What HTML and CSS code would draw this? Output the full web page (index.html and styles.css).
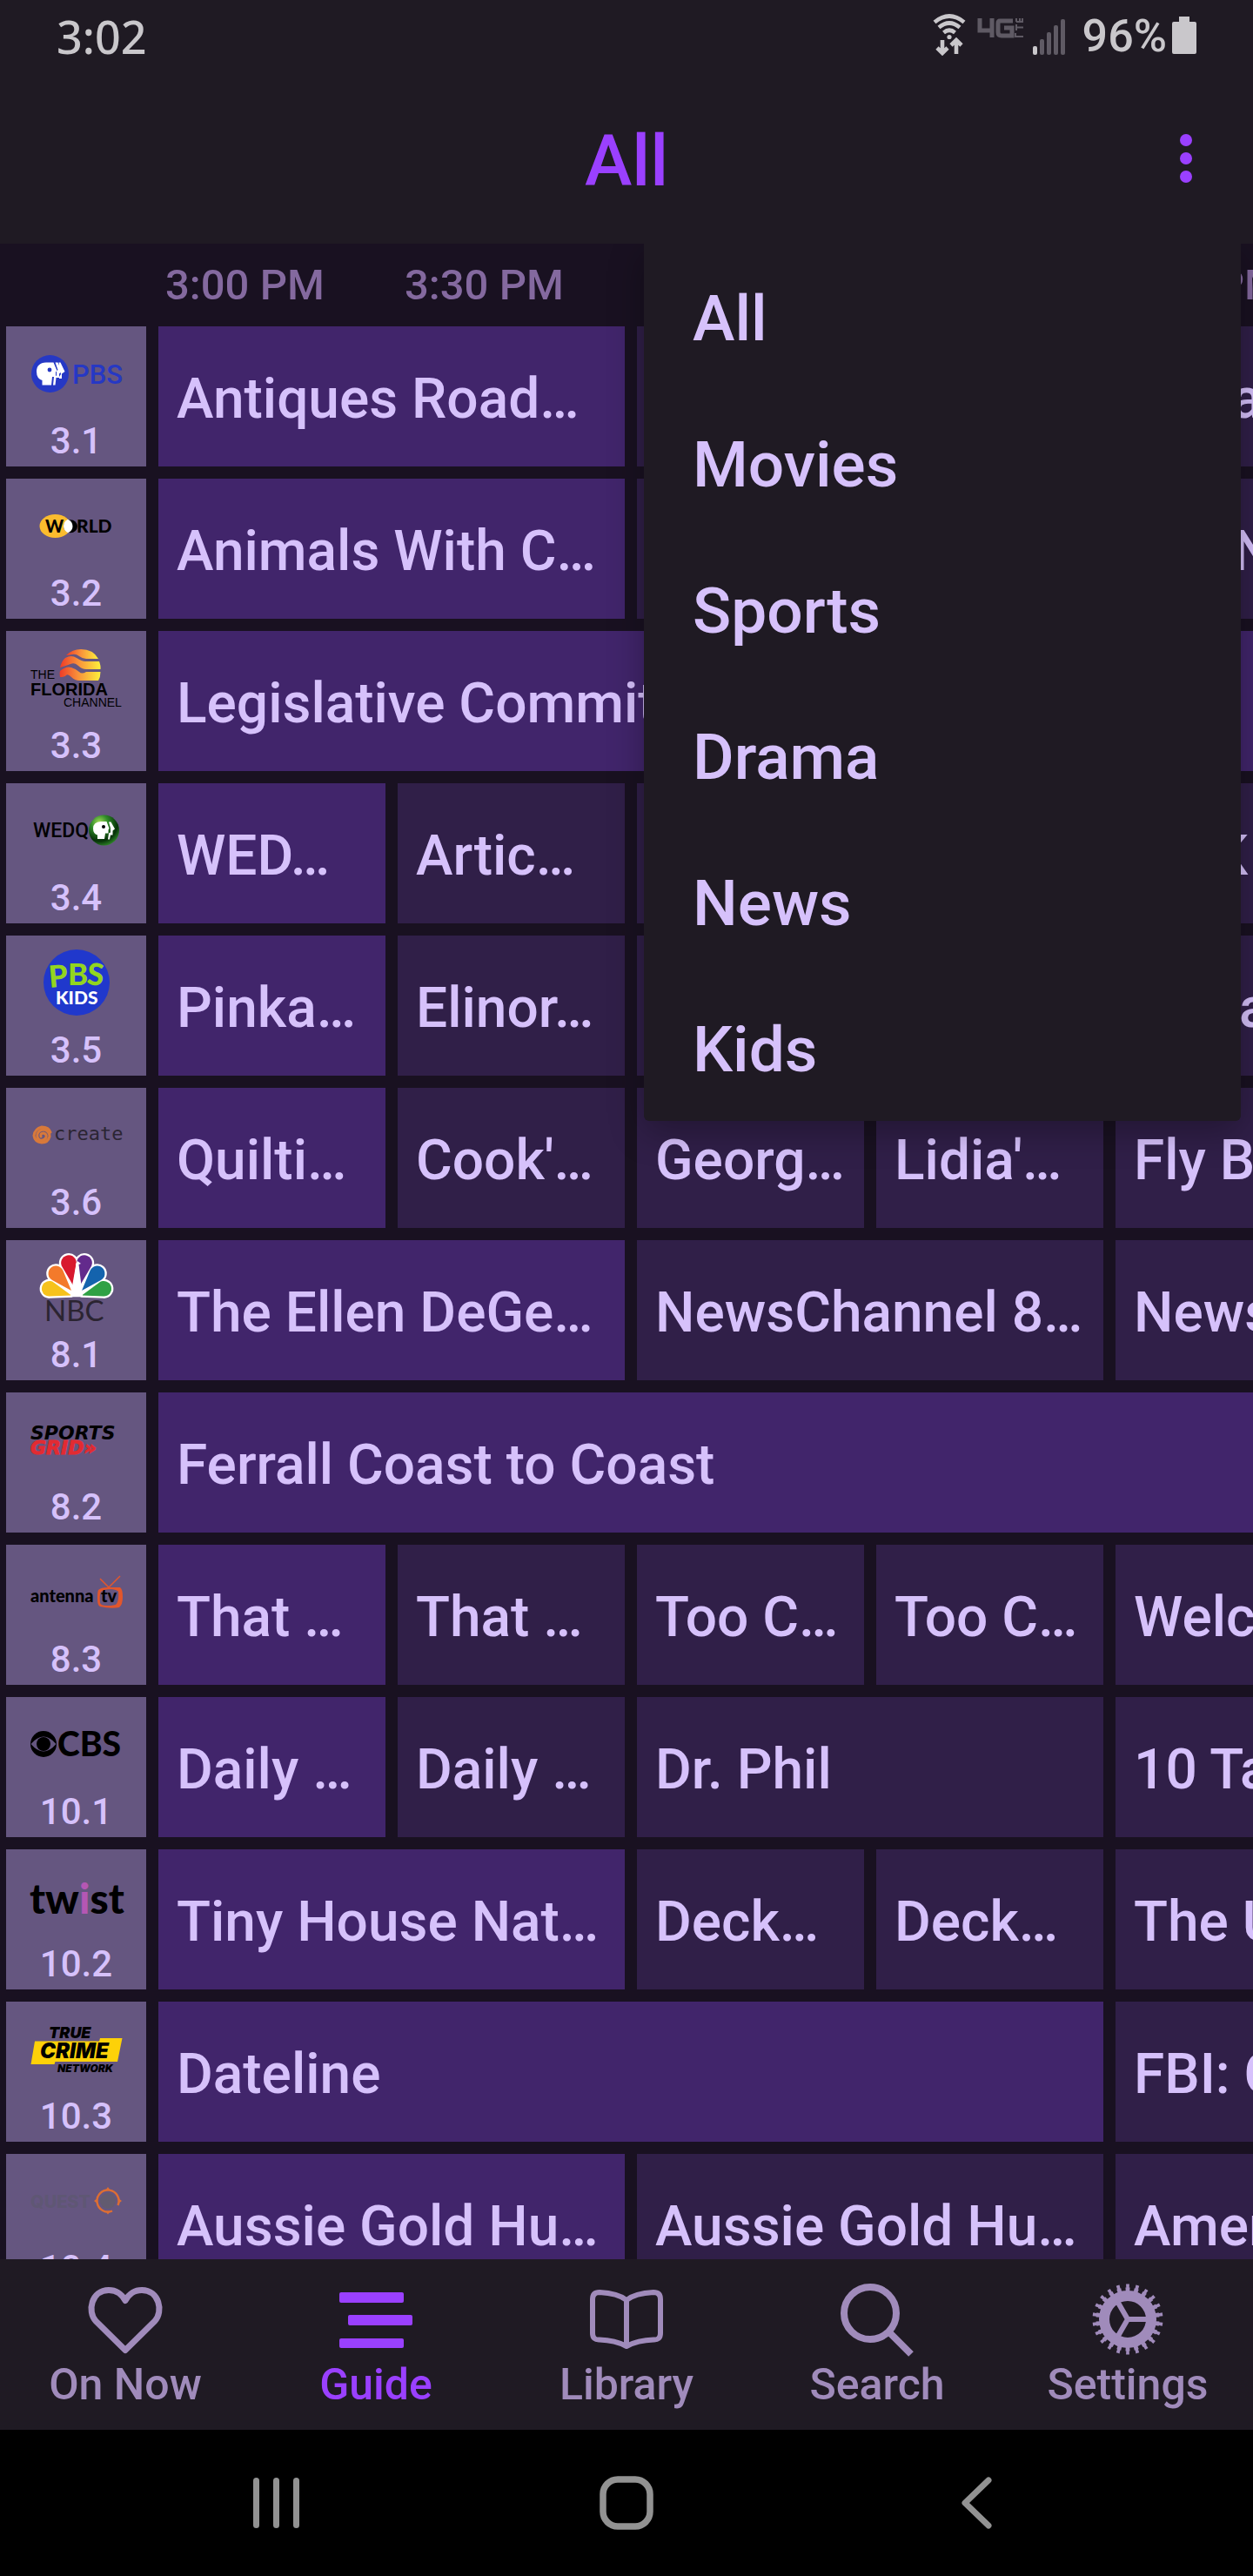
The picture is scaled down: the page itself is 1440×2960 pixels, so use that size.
FILE: index.html
```html
<!DOCTYPE html>
<html lang="en">
<head>
<meta charset="utf-8">
<meta name="viewport" content="width=device-width, initial-scale=1">
<title>Guide</title>
<link rel="stylesheet" href="styles.css">
</head>
<body>
<div class="status-bar">
  <span class="clock">3:02</span>
  <div class="status-icons">
    <svg class="icon-wifi" viewBox="0 0 38 48" width="38" height="48" aria-hidden="true">
      <g fill="none" stroke="currentColor" stroke-width="4.6">
        <path d="M2 9.500Q19 -4.500 36 9.500"/><path d="M7 15.500Q19 5.500 31 15.500"/><path d="M12.500 21.500Q19 16 25.500 21.500"/>
        <path d="M11 30v14M5 39l6 6 6-6M27 46V31M21 36l6-6 6 6"/>
      </g>
      <circle cx="19" cy="26.500" r="2.600" fill="currentColor"/>
    </svg>
    <svg class="icon-lte" viewBox="0 0 54 24" width="54" height="24" aria-hidden="true">
      <g fill="none" stroke="currentColor" stroke-width="5"><path d="M3 1v14h15M17 1v22M41 4H26Q24 4 24 7v10q0 4 4 4h12v-9H31"/></g>
      <g fill="none" stroke="currentColor" stroke-width="2"><path d="M44 18v4h9M45 8v7M45 11.500h8M45 5V1M45 5h7V1M49 5V1"/></g>
    </svg>
    <svg class="icon-signal" viewBox="0 0 38 42" width="38" height="42" aria-hidden="true">
      <g fill="#5f5a64"><rect x="9" y="23" width="5" height="18" rx="2"/><rect x="17" y="15" width="5" height="26" rx="2"/><rect x="25" y="7" width="5" height="34" rx="2"/><rect x="33" y="0" width="5" height="41" rx="2"/></g>
      <rect x="1" y="31" width="5" height="10" rx="2" fill="currentColor"/>
    </svg>
    <span class="battery-level">96%</span>
    <svg class="icon-battery" viewBox="0 0 28 43" width="28" height="43" aria-hidden="true"><path fill="currentColor" d="M8 0h12v6h6q2 0 2 2v33q0 2-2 2H2q-2 0-2-2V8q0-2 2-2h6z"/></svg>
  </div>
</div>

<header class="app-bar">
  <h1>All</h1>
  <button class="more" type="button" aria-label="More options" aria-expanded="true" aria-controls="filter-menu">
    <svg viewBox="0 0 14 56" width="14" height="56" aria-hidden="true"><g fill="currentColor"><circle cx="7" cy="7" r="7"/><circle cx="7" cy="28" r="7"/><circle cx="7" cy="49" r="7"/></g></svg>
  </button>
</header>

<main class="guide">
  <table class="schedule">
    <thead>
      <tr><td></td><th scope="col">3:00 PM</th><th scope="col">3:30 PM</th><th scope="col">4:00 PM</th><th scope="col">4:30 PM</th><th scope="col">5:00 PM</th></tr>
    </thead>
    <tbody>
      <tr>
        <th scope="row" class="channel">
          <svg viewBox="0 0 161 107" role="img" aria-label="PBS">
            <circle cx="50.500" cy="54.500" r="21.500" fill="#2638c4"/>
            <path fill="#fff" d="M35 52q0-10 11-10.500h8.500l4 9.500-1.500 1.500v5.500h-4l-1 9.500H41.500v-5.500Q35 60 35 52zM56.500 41.500h3l4.500 10-3 3v4.500h-3.500l-1 8.500h-2.500l1-9.500 3-1.500v-5l1.500-1.500zM60.500 41.500h2l5 10.500-3.500 2.500v5.500h-3v-2l2-3z"/>
            <circle cx="50" cy="50" r="2.400" fill="#2638c4"/>
            <text x="76" y="66" class="face-plain" font-size="31" fill="#2638c4">PBS</text>
          </svg>
          <span>3.1</span>
        </th>
        <td class="on span-2" colspan="2">Antiques Road…</td><td class="span-2" colspan="2"></td><td>Nova</td>
      </tr>
      <tr>
        <th scope="row" class="channel">
          <svg viewBox="0 0 161 107" role="img" aria-label="World">
            <ellipse cx="56.500" cy="54.500" rx="18" ry="13.500" fill="#fbbc2e"/>
            <ellipse cx="74" cy="54.700" rx="8" ry="7.500"/>
            <path fill="#fff" d="M71 46.800q5.500 2.700 5.500 8t-5.500 7.500q-5-2.500-5-7.700t5-7.800z"/>
            <text x="45" y="62" class="face-round" font-size="20">W</text>
            <text x="81" y="62" class="face-round" font-size="21">RLD</text>
          </svg>
          <span>3.2</span>
        </th>
        <td class="on span-2" colspan="2">Animals With C…</td><td class="span-2" colspan="2"></td><td>DW News</td>
      </tr>
      <tr>
        <th scope="row" class="channel">
          <svg viewBox="0 0 161 107" role="img" aria-label="The Florida Channel">
            <defs><linearGradient id="sun"><stop offset="0" stop-color="#ee3b28"/><stop offset=".45" stop-color="#f9913a"/><stop offset="1" stop-color="#fdf03c"/></linearGradient></defs>
            <path fill="url(#sun)" d="M69 28Q76 21 86 21q14 0 20 11H92q-4 0-8-3t-8-2-7 1z"/>
            <path fill="url(#sun)" d="M62 42q2-8 6-11 7-4 13 0t10 4h16q2 5 1.500 9H92q-5 0-9-4t-9-2-12 4z"/>
            <path fill="url(#sun)" d="M62 46q7-6 13-4t9 5 8 0h16.500q0 6-2.500 10H84q-5 0-9-4t-6-2-7 2q-1-4 0-7z"/>
            <text x="28" y="55" class="face-sans" font-size="14">THE</text>
            <text x="28" y="74" class="face-sans-bold" font-size="20">FLORIDA</text>
            <text x="66" y="87" class="face-sans" font-size="14">CHANNEL</text>
          </svg>
          <span>3.3</span>
        </th>
        <td class="on span-5" colspan="5">Legislative Committee</td>
      </tr>
      <tr>
        <th scope="row" class="channel">
          <svg viewBox="0 0 161 107" role="img" aria-label="WEDQ">
            <defs><radialGradient id="ball" cx=".35" cy=".25" r=".8"><stop offset="0" stop-color="#a6e05a"/><stop offset=".35" stop-color="#2f8a28"/><stop offset=".75" stop-color="#063008"/><stop offset="1" stop-color="#2f8a28"/></radialGradient></defs>
            <text x="31" y="62" class="face-plain" font-size="23">WEDQ</text>
            <circle cx="112.500" cy="54" r="17.500" fill="url(#ball)"/>
            <path fill="#fff" d="M100 52q0-7.500 9-8h6.500l3 8-1 1.500v4h-3.500l-1 6.500h-8v-4.500Q100 58 100 52zM118 44.500h2.500l4.500 8-2.500 2v5h-2.500l-1 5h-2l1-7 2-1v-5z"/>
            <circle cx="112" cy="50" r="2"/>
          </svg>
          <span>3.4</span>
        </th>
        <td class="on">WED…</td><td>Artic…</td><td></td><td></td><td>NHK Newsline</td>
      </tr>
      <tr>
        <th scope="row" class="channel">
          <svg viewBox="0 0 161 107" role="img" aria-label="PBS Kids">
            <circle cx="81" cy="54" r="38" fill="#2038cc"/>
            <g class="face-round"><text x="50" y="59" font-size="35" fill="#93d51f" transform="rotate(-5 60 60)">P</text><text x="71" y="57" font-size="35" fill="#93d51f">B</text><text x="92" y="57" font-size="35" fill="#93d51f" transform="rotate(6 101 57)">S</text>
            <text x="57" y="79" font-size="21" fill="#fff">KIDS</text></g>
          </svg>
          <span>3.5</span>
        </th>
        <td class="on">Pinka…</td><td>Elinor…</td><td></td><td></td><td>Maya &amp; Miguel</td>
      </tr>
      <tr>
        <th scope="row" class="channel">
          <svg viewBox="0 0 161 107" role="img" aria-label="Create">
            <path fill="none" stroke="#d8793a" stroke-width="3" stroke-linecap="round" d="M40 56q-1-4 3-4 4 1 3 5-2 4-7 3-4-2-3-7 2-5 8-5 6 2 6 8-2 7-9 7-8-1-9-8 1-8 9-10 8 0 10 6"/>
            <text x="55" y="60" class="face-mono" font-size="22" fill="#2b2533">create</text>
          </svg>
          <span>3.6</span>
        </th>
        <td class="on">Quilti…</td><td>Cook'…</td><td>Georg…</td><td>Lidia'…</td><td>Fly Brother</td>
      </tr>
      <tr>
        <th scope="row" class="channel">
          <svg viewBox="0 0 161 107" role="img" aria-label="NBC">
            <defs><path id="petal" d="M0 0L-8.300-23.500A8.800 8.800 0 1 1 8.300-23.500Z"/></defs>
            <g fill="#fff" stroke="#fff" stroke-width="4.600" stroke-linejoin="round">
              <use href="#petal" transform="translate(75 63.500) rotate(-73)"/><use href="#petal" transform="translate(75 58) rotate(-42)"/><use href="#petal" transform="translate(77 52) rotate(-11)"/><use href="#petal" transform="translate(85 52) rotate(11)"/><use href="#petal" transform="translate(87 58) rotate(42)"/><use href="#petal" transform="translate(87 63.500) rotate(73)"/>
              <path d="M50 63H112L84 30H79z"/>
            </g>
            <use href="#petal" fill="#f6c21c" transform="translate(75 63.500) rotate(-73)"/><use href="#petal" fill="#f37a2b" transform="translate(75 58) rotate(-42)"/><use href="#petal" fill="#d8192e" transform="translate(77 52) rotate(-11)"/><use href="#petal" fill="#632a8c" transform="translate(85 52) rotate(11)"/><use href="#petal" fill="#1463ad" transform="translate(87 58) rotate(42)"/><use href="#petal" fill="#2fa145" transform="translate(87 63.500) rotate(73)"/>
            <path fill="#fff" d="M74 64L80 30 80 27.500 82 24 86 27 83.500 28 88 64z"/>
            <text x="44" y="93" class="face-light" font-size="33" fill="#2b2431">NBC</text>
          </svg>
          <span>8.1</span>
        </th>
        <td class="on span-2" colspan="2">The Ellen DeGe…</td><td class="span-2" colspan="2">NewsChannel 8…</td><td>NewsChannel</td>
      </tr>
      <tr>
        <th scope="row" class="channel">
          <svg viewBox="0 0 161 107" role="img" aria-label="SportsGrid">
            <g class="face-wide" font-size="22"><text x="28" y="54">SPORTS</text><text x="28" y="71" fill="#e22b32" stroke="#e22b32">GRID»</text></g>
          </svg>
          <span>8.2</span>
        </th>
        <td class="on span-5" colspan="5">Ferrall Coast to Coast</td>
      </tr>
      <tr>
        <th scope="row" class="channel">
          <svg viewBox="0 0 161 107" role="img" aria-label="Antenna TV">
            <path fill="none" stroke="#e2562c" stroke-width="1.500" d="M118 49L108 39M118 49L131 36"/>
            <path fill="#e2562c" fill-rule="evenodd" d="M106 52q3-3 11-3h14q3 2 3 11t-4 12q-10 2-22-1-3-1-3-9t1-10zM109 54q-2 3-1 13 1 3 8 3 9 0 11-2 3-5 2-14-1-2-8-3-9 0-12 3z"/>
            <g class="face-round" font-size="20"><text x="28" y="66">antenna</text><text x="109" y="66">tv</text></g>
          </svg>
          <span>8.3</span>
        </th>
        <td class="on">That …</td><td>That …</td><td>Too C…</td><td>Too C…</td><td>Welcome Back</td>
      </tr>
      <tr>
        <th scope="row" class="channel">
          <svg viewBox="0 0 161 107" role="img" aria-label="CBS">
            <circle cx="43" cy="54" r="15"/><path fill="#655680" d="M28.500 54Q43 37 57.500 54 43 71 28.500 54z"/><circle cx="43" cy="54" r="8"/>
            <text x="59" y="68" class="face-round" font-size="39">CBS</text>
          </svg>
          <span>10.1</span>
        </th>
        <td class="on">Daily …</td><td>Daily …</td><td class="span-2" colspan="2">Dr. Phil</td><td>10 Tampa Bay</td>
      </tr>
      <tr>
        <th scope="row" class="channel">
          <svg viewBox="0 0 161 107" role="img" aria-label="Twist">
            <text x="27" y="74" class="face-round" font-size="48">tw<tspan fill="#b457b4">i</tspan>st</text>
          </svg>
          <span>10.2</span>
        </th>
        <td class="on span-2" colspan="2">Tiny House Nat…</td><td>Deck…</td><td>Deck…</td><td>The Unexplained</td>
      </tr>
      <tr>
        <th scope="row" class="channel">
          <svg viewBox="0 0 161 107" role="img" aria-label="True Crime Network">
            <path fill="#fdd108" d="M33 45.500h74l1-3.500h25.500L128 69H56.500l-1 3H28.500z"/>
            <g class="face-slant"><text x="49" y="42" font-size="18">TRUE</text><text x="39" y="65" font-size="24">CRIME</text><text x="59" y="81" font-size="12">NETWORK</text></g>
          </svg>
          <span>10.3</span>
        </th>
        <td class="on span-4" colspan="4">Dateline</td><td>FBI: Criminal</td>
      </tr>
      <tr>
        <th scope="row" class="channel">
          <svg viewBox="0 0 161 107" role="img" aria-label="Quest">
            <text x="28" y="62" class="face-heavy" font-size="20" fill="#5f5774">QUEST</text>
            <circle cx="117" cy="54" r="9" fill="#625b70"/>
            <path fill="none" stroke="#dd6e33" stroke-width="2.400" d="M122 65.500A12.500 12.500 0 1 1 128.500 59"/>
            <path fill="#dd6e33" d="M114 42l3-4 3 4zM105 51l-4 3 4 3zM114 65.500l3 4 3-4zM129 51l4 3-4 3z"/>
          </svg>
          <span>10.4</span>
        </th>
        <td class="on span-2" colspan="2">Aussie Gold Hu…</td><td class="span-2" colspan="2">Aussie Gold Hu…</td><td>America</td>
      </tr>
    </tbody>
  </table>

  <ul class="filter-menu" id="filter-menu">
    <li><button type="button">All</button></li>
    <li><button type="button">Movies</button></li>
    <li><button type="button">Sports</button></li>
    <li><button type="button">Drama</button></li>
    <li><button type="button">News</button></li>
    <li><button type="button">Kids</button></li>
  </ul>
</main>

<nav class="tabs" aria-label="Main">
  <a href="#on-now">
    <svg viewBox="0 0 90 90" aria-hidden="true"><path fill="none" stroke="currentColor" stroke-width="7" stroke-linejoin="round" d="M45 80.500L11 47C1 36 6 11.500 26 11.500c10 0 15 5 19 12 4-7 9-12 19-12 20 0 25 24.500 15 35.500z"/></svg>
    <span>On Now</span>
  </a>
  <a href="#guide" class="current" aria-current="page">
    <svg viewBox="0 0 90 90" aria-hidden="true"><g fill="currentColor"><rect x="3" y="14" width="74" height="12" rx="2"/><rect x="13" y="40" width="74" height="12" rx="2"/><rect x="3" y="67" width="74" height="11" rx="2"/></g></svg>
    <span>Guide</span>
  </a>
  <a href="#library">
    <svg viewBox="0 0 90 90" aria-hidden="true"><path fill="none" stroke="currentColor" stroke-width="6" stroke-linejoin="round" d="M45 76Q32 69 14 68.500 6 69 6 61V22q0-8 8-8 21 1 31 9 10-8 31-9 8 0 8 8v39q0 8-8 7.500Q58 69 45 76zM45 23v53"/></svg>
    <span>Library</span>
  </a>
  <a href="#search">
    <svg viewBox="0 0 90 90" aria-hidden="true"><g fill="none" stroke="currentColor"><circle cx="37" cy="38" r="30" stroke-width="8"/><path stroke-width="8" d="M59 60l25 25"/></g></svg>
    <span>Search</span>
  </a>
  <a href="#settings">
    <svg viewBox="0 0 90 90" aria-hidden="true">
      <g fill="none" stroke="currentColor">
        <circle cx="45" cy="45" r="27" stroke-width="12"/>
        <circle cx="45" cy="45" r="34" stroke-width="5" pathLength="220" stroke-dasharray="5 5" stroke-dashoffset="7.500"/>
        <circle cx="45" cy="45" r="38" stroke-width="5" pathLength="220" stroke-dasharray="3.400 6.600" stroke-dashoffset="6.700"/>
        <path stroke-width="6" d="M45 45h24M45 45L33 24.200M45 45L33 65.800"/>
      </g>
    </svg>
    <span>Settings</span>
  </a>
</nav>

<div class="system-nav">
  <button type="button" aria-label="Recent apps"><svg viewBox="0 0 62 62" aria-hidden="true"><g fill="currentColor"><rect x="5" y="2" width="7" height="58" rx="3.500"/><rect x="28" y="2" width="7" height="58" rx="3.500"/><rect x="51" y="2" width="7" height="58" rx="3.500"/></g></svg></button>
  <button type="button" aria-label="Home"><svg viewBox="0 0 62 62" aria-hidden="true"><rect x="4" y="4" width="54" height="54" rx="17" fill="none" stroke="currentColor" stroke-width="7.500"/></svg></button>
  <button type="button" aria-label="Back"><svg viewBox="0 0 62 62" aria-hidden="true"><path fill="none" stroke="currentColor" stroke-width="7" stroke-linecap="round" stroke-linejoin="round" d="M44 5L17 31l27 26"/></svg></button>
</div>
</body>
</html>
```
FILE: styles.css
```css
:root {
  --bar: #1f1a23;
  --backdrop: #191121;
  --airing: #41256b;
  --later: #301f48;
  --channel: #655680;
  --lilac: #d6c1fb;
  --accent: #9a40ff;
  --slot: 261px;
  --gap: 14px;
}

* {
  box-sizing: border-box;
}

body {
  margin: 0;
  height: 100vh;
  display: flex;
  flex-direction: column;
  overflow: hidden;
  background: var(--backdrop);
  color: var(--lilac);
  font-family: Roboto, "Noto Sans", sans-serif;
  font-weight: 500;
}

button {
  padding: 0;
  border: 0;
  background: none;
  color: inherit;
  font: inherit;
  cursor: pointer;
}

/* Status bar */
.status-bar {
  display: flex;
  justify-content: space-between;
  flex: none;
  height: 84px;
  padding: 0 65px;
  background: var(--bar);
  color: #c9c7cb;
  font-family: "Noto Sans", Roboto, sans-serif;
  font-size: 52px;
  line-height: 84px;
}

.status-icons {
  display: flex;
}

.icon-wifi {
  margin: 16px 13px 0 0;
}

.icon-lte {
  margin: 20px 9px 0 0;
  color: #5f5a64;
}

.icon-signal {
  margin: 22px 20px 0 0;
}

.battery-level {
  font-family: Roboto, sans-serif;
}

.icon-battery {
  margin: 19px 0 0 6px;
}

/* Title bar */
.app-bar {
  display: grid;
  grid-template-columns: 1fr auto 1fr;
  align-items: center;
  flex: none;
  height: 196px;
  padding: 0 70px;
  background: var(--bar);
  color: var(--accent);
}

.app-bar h1 {
  grid-column: 2;
  margin: 0;
  padding-top: 6px;
  font-size: 82px;
  font-weight: 500;
  line-height: 190px;
}

.more {
  justify-self: end;
  height: 56px;
}

.more svg {
  display: block;
}

/* Programme guide */
.guide {
  position: relative;
  flex: 1;
  min-height: 0;
  overflow: hidden;
}

.schedule,
.schedule thead,
.schedule tbody {
  display: block;
}

.schedule tbody {
  display: grid;
  gap: var(--gap);
}

.schedule tr {
  display: grid;
  grid-template-columns: 161px repeat(5, var(--slot));
  gap: var(--gap);
  padding-left: 7px;
}

.schedule thead th {
  padding: 0 8px;
  color: #84699f;
  font-size: 49px;
  font-weight: 500;
  line-height: 95px;
  text-align: left;
  white-space: nowrap;
}

.schedule thead td {
  padding: 0;
}

.schedule tbody td {
  height: 161px;
  padding: 0 21px;
  overflow: hidden;
  background: var(--later);
  font-size: 64px;
  line-height: 167px;
  white-space: nowrap;
}

.schedule tbody .on {
  background: var(--airing);
}

.span-2 {
  grid-column: span 2;
}

.span-4 {
  grid-column: span 4;
}

.span-5 {
  grid-column: span 5;
}

.channel {
  display: flex;
  flex-direction: column;
  height: 161px;
  padding: 0;
  background: var(--channel);
  font-size: 42px;
  font-weight: 500;
  line-height: 50px;
  text-align: center;
}

.channel svg {
  display: block;
  width: 161px;
  height: 107px;
}

/* Lettering inside the channel logos */
.face-sans {
  font-family: "Liberation Sans", sans-serif;
  font-weight: 400;
}

.face-sans-bold {
  font-family: "Liberation Sans", sans-serif;
  font-weight: 700;
}

.face-plain {
  font-family: Roboto, sans-serif;
  font-weight: 500;
}

.face-round {
  font-family: Lato, sans-serif;
  font-weight: 900;
}

.face-light {
  font-family: Lato, sans-serif;
  font-weight: 400;
}

.face-mono {
  font-family: "DejaVu Sans Mono", monospace;
  font-weight: 400;
}

.face-wide {
  font-family: "DejaVu Sans", sans-serif;
  font-style: italic;
  font-weight: 700;
}

.face-heavy {
  font-family: Inter, sans-serif;
  font-weight: 800;
}

.face-slant {
  font-family: Inter, sans-serif;
  font-style: italic;
  font-weight: 900;
}

/* Category menu over the guide */
.filter-menu {
  position: absolute;
  top: 0;
  right: 14px;
  width: 686px;
  margin: 0;
  padding: 0;
  border-radius: 0 0 6px 6px;
  background: var(--bar);
  box-shadow: 0 12px 40px rgba(0, 0, 0, 0.3);
  list-style: none;
}

.filter-menu button {
  display: block;
  width: 100%;
  height: 168px;
  padding: 4px 56px 0;
  font-size: 73px;
  line-height: 164px;
  text-align: left;
}

/* Tabs */
.tabs {
  display: grid;
  grid-template-columns: repeat(5, 1fr);
  flex: none;
  height: 196px;
  padding-top: 24px;
  background: var(--bar);
}

.tabs a {
  display: flex;
  flex-direction: column;
  align-items: center;
  color: #a08bbb;
  font-size: 50px;
  line-height: 60px;
  text-decoration: none;
}

.tabs .current {
  color: var(--accent);
}

.tabs svg {
  display: block;
  width: 90px;
  height: 90px;
}

/* System navigation */
.system-nav {
  display: grid;
  grid-template-columns: repeat(3, 1fr);
  align-items: center;
  flex: none;
  height: 168px;
  padding: 0 116px;
  background: #000;
  color: #929292;
}

.system-nav button {
  display: grid;
  place-items: center;
}

.system-nav svg {
  width: 62px;
  height: 62px;
}
```
